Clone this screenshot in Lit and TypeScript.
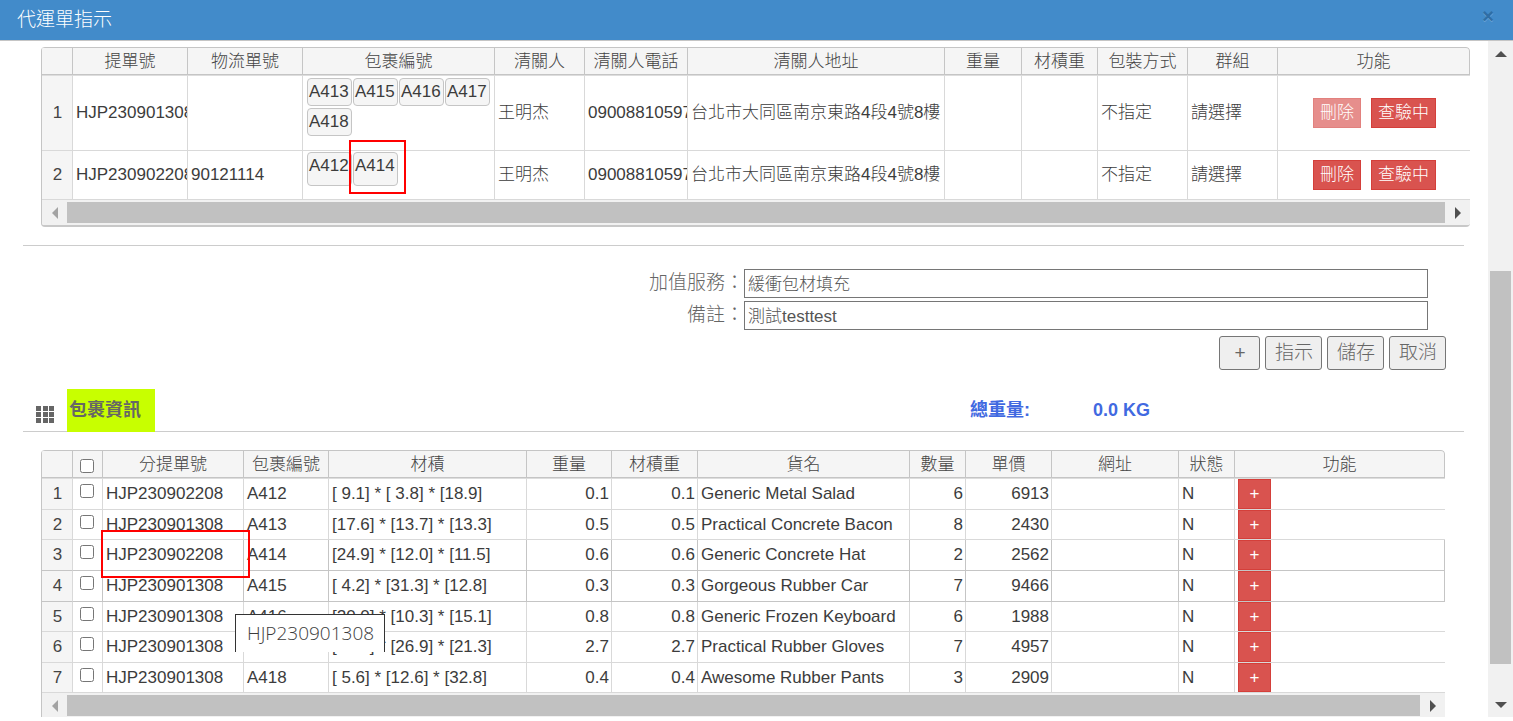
import { LitElement, html, css, svg, nothing } from "lit";
import { customElement, property } from "lit/decorators.js";

interface Shipment {
  no: string;
  logistics: string;
  parcels: string[];
  marked?: string;
  locked: boolean;
}

interface Parcel {
  bill: string;
  code: string;
  size: string;
  weight: string;
  name: string;
  qty: number;
  price: number;
}

const SHIPMENTS: Shipment[] = [
  { no: "HJP230901308", logistics: "", parcels: ["A413", "A415", "A416", "A417", "A418"], locked: true },
  { no: "HJP230902208", logistics: "90121114", parcels: ["A412", "A414"], marked: "A414", locked: false },
];

const PARCELS: Parcel[] = [
  { bill: "HJP230902208", code: "A412", size: "[ 9.1] * [ 3.8] * [18.9]", weight: "0.1", name: "Generic Metal Salad", qty: 6, price: 6913 },
  { bill: "HJP230901308", code: "A413", size: "[17.6] * [13.7] * [13.3]", weight: "0.5", name: "Practical Concrete Bacon", qty: 8, price: 2430 },
  { bill: "HJP230902208", code: "A414", size: "[24.9] * [12.0] * [11.5]", weight: "0.6", name: "Generic Concrete Hat", qty: 2, price: 2562 },
  { bill: "HJP230901308", code: "A415", size: "[ 4.2] * [31.3] * [12.8]", weight: "0.3", name: "Gorgeous Rubber Car", qty: 7, price: 9466 },
  { bill: "HJP230901308", code: "A416", size: "[20.0] * [10.3] * [15.1]", weight: "0.8", name: "Generic Frozen Keyboard", qty: 6, price: 1988 },
  { bill: "HJP230901308", code: "A417", size: "[20.7] * [26.9] * [21.3]", weight: "2.7", name: "Practical Rubber Gloves", qty: 7, price: 4957 },
  { bill: "HJP230901308", code: "A418", size: "[ 5.6] * [12.6] * [32.8]", weight: "0.4", name: "Awesome Rubber Pants", qty: 3, price: 2909 },
];

/* The last column has no width: it takes what is left. */
const SHIPMENT_COLS: [string, number | null][] = [
  ["", 31], ["提單號", 115], ["物流單號", 115], ["包裹編號", 192], ["清關人", 90], ["清關人電話", 103],
  ["清關人地址", 257], ["重量", 77], ["材積重", 76], ["包裝方式", 90], ["群組", 90], ["功能", null],
];
const PARCEL_COLS: [string, number | null][] = [
  ["", 31], ["check", 30], ["分提單號", 141], ["包裹編號", 85], ["材積", 198], ["重量", 85], ["材積重", 86],
  ["貨名", 212], ["數量", 56], ["單價", 86], ["網址", 127], ["狀態", 56], ["功能", null],
];

const ARROWS: Record<string, string> = {
  up: "M6 0L12 6H0Z",
  down: "M0 0H12L6 6Z",
  left: "M6 0V12L0 6Z",
  right: "M0 0V12L6 6Z",
};

@customElement("scroll-rail")
class ScrollRail extends LitElement {
  @property() orientation = "horizontal";

  static styles = css`
    :host { display: flex; background: #f1f1f1; box-sizing: border-box; }
    :host([orientation="horizontal"]) { height: 25px; padding: 2px 0; }
    :host([orientation="vertical"]) { width: 25px; padding: 0 2px; flex-direction: column; }
    .end { flex: 0 0 25px; display: flex; align-items: center; justify-content: center; color: #505050; }
    .idle { color: #a3a3a3; }
    .thumb { flex: 1; background: #c1c1c1; }
    .before { flex: 205; }
    .long { flex: 393; }
    .after { flex: 28; }
    svg { display: block; fill: currentColor; }
  `;

  private arrow(dir: string) {
    const flat = dir === "up" || dir === "down";
    return html`<svg width=${flat ? 12 : 6} height=${flat ? 6 : 12} aria-hidden="true">${svg`<path d=${ARROWS[dir]}></path>`}</svg>`;
  }

  render() {
    return this.orientation === "vertical"
      ? html`<div class="end">${this.arrow("up")}</div>
          <div class="before"></div><div class="long thumb"></div><div class="after"></div>
          <div class="end">${this.arrow("down")}</div>`
      : html`<div class="end idle">${this.arrow("left")}</div>
          <div class="thumb"></div>
          <div class="end">${this.arrow("right")}</div>`;
  }
}

@customElement("app-root")
class AppRoot extends LitElement {
  static styles = css`
    :host {
      display: flex;
      flex-direction: column;
      height: 100vh;
      box-sizing: border-box;
      padding-bottom: 4px;
      overflow: hidden;
      background: #fff;
      color: #3c3c3c;
      font: 300 17px/24px "Liberation Sans", "Noto Sans CJK TC", sans-serif;
    }
    * { box-sizing: border-box; }
    button, input { font: inherit; color: inherit; margin: 0; }

    .title {
      flex: none;
      display: flex;
      justify-content: space-between;
      height: 41px;
      padding: 0 19px 0 17px;
      background: #428bca;
      border-bottom: 1px solid #c5c5c5;
      color: #fff;
    }
    .title h1 { margin: 0; font-size: 19px; font-weight: 300; line-height: 40px; }
    .close {
      border: 0;
      padding: 0;
      height: 32px;
      background: none;
      color: #2f6ea5;
      font-size: 20px;
      font-weight: 700;
      text-shadow: 0 1px 0 #6ba5d8;
    }

    .body { flex: 1; min-height: 0; display: flex; }
    .content { flex: 1; min-width: 0; overflow: hidden; padding-top: 6px; }
    .rail { flex: none; }

    .grid { margin: 0 18px 0 41px; border-left: 1px solid #c5c5c5; border-radius: 4px; overflow: hidden; }
    .shipments { border-bottom: 2px solid #c8c8c8; }
    .parcels { margin-right: 43px; border-radius: 4px 4px 0 0; }
    table { width: 100%; table-layout: fixed; border-collapse: separate; border-spacing: 0; }
    thead th {
      height: 28px;
      padding: 2px 0 0;
      font-weight: 300;
      text-align: center;
      color: #444;
      background: #f5f5f5;
      border: solid #c5c5c5;
      border-width: 1px 1px 1px 0;
      line-height: 24px;
    }
    thead th:last-child { border-top-right-radius: 4px; }
    tbody tr:first-child > * { border-top: 1px solid #ddd; }
    tbody th, td {
      padding: 0 2px 0 3px;
      font-weight: 300;
      text-align: left;
      white-space: pre;
      overflow: hidden;
      border: solid #d9d9d9;
      border-width: 0 1px 1px 0;
    }
    tbody th { text-align: center; background: #f5f5f5; color: #444; }
    td:last-child { border-right: 0; }
    td.num { text-align: right; }
    td.over { position: relative; overflow: visible; }

    .shipments tbody tr { height: 49px; }
    .shipments tbody tr:first-child { height: 76px; }
    td.codes { vertical-align: top; padding: 2px 0 2px 4px; }
    tr + tr td.codes { padding-top: 1px; }
    .tags { display: flex; flex-wrap: wrap; gap: 2px 1px; }
    .tag {
      width: 45px;
      height: 28px;
      border: 1px solid #c5c5c5;
      border-radius: 4px;
      background: #f5f5f5;
      padding: 0 1px;
      line-height: 26px;
    }
    tr + tr .tag { height: 34px; }
    .holder { position: relative; }
    .mark { position: absolute; border: 2px solid #f00; pointer-events: none; z-index: 1; }
    .mark-tag { left: -5px; top: -13px; width: 57px; height: 54px; }
    .mark-bill { left: -2px; top: -10px; width: 149px; height: 48px; }

    .actions { display: flex; justify-content: center; gap: 10px; }
    .danger {
      height: 30px;
      padding: 0 6px;
      border: 1px solid #d43f3a;
      background: #d9534f;
      color: #fff;
      line-height: 26px;
    }
    .danger:disabled { opacity: 0.65; }

    .parcels tbody tr { --inner: 30px; }
    .parcels tbody tr:nth-child(3n - 1), .parcels tbody tr:last-child { --inner: 29px; }
    .parcels tbody tr > * { height: calc(var(--inner) + 1px); }
    .parcels .add { display: block; width: 33px; height: var(--inner); }
    .parcels .current > * { border-bottom-color: #c5c5c5; }
    .parcels .current td { border-right-color: #c5c5c5; }
    .parcels .current td:last-child { box-shadow: inset -1px 0 #c5c5c5; }
    .parcels .check { padding: 5px 0 0 7px; vertical-align: top; text-align: left; line-height: 14px; }
    .parcels thead .check { padding-top: 8px; }
    .check input { display: block; width: 14px; height: 14px; }
    .tip {
      position: absolute;
      left: -9px;
      top: 12px;
      z-index: 2;
      width: 150px;
      height: 38px;
      padding: 0 11px;
      border: 1px solid #333;
      border-bottom: 0;
      background: #fff;
      font: 300 19px/36px "Open Sans", "Noto Sans", sans-serif;
    }

    .form {
      margin: 18px 24px 0 23px;
      padding: 23px 36px 0 0;
      border-top: 1px solid #ccc;
      color: #555;
      display: grid;
      grid-template-columns: 721fr 684fr;
      row-gap: 3px;
    }
    .form label { text-align: right; font-size: 19px; line-height: 27px; color: #666; }
    .form input { width: 100%; height: 29px; padding: 0 3px 3px; border: 1px solid #767676; background: #fff; }
    .buttons { display: flex; justify-content: flex-end; gap: 5px; margin: 6px 42px 0 0; color: #666; }
    .buttons button {
      height: 34px;
      min-width: 41px;
      padding: 0 8px 0 9px;
      border: 1px solid #767676;
      border-radius: 3px;
      background: #efefef;
      font-size: 19px;
      line-height: 30px;
    }

    .section {
      display: grid;
      grid-template-columns: 44fr 903fr 123fr 371fr;
      margin: 19px 24px 18px 23px;
      border-bottom: 1px solid #ccc;
      height: 43px;
      font-size: 18px;
      font-weight: 700;
      line-height: 42px;
      color: #4169e1;
    }
    .section h2 {
      justify-self: start;
      width: 88px;
      height: 43px;
      margin: 0;
      padding-left: 2px;
      background: #c8ff00;
      color: #666;
      font-size: 18px;
      line-height: 42px;
    }
    .section svg { margin: 17px 0 0 13px; display: block; fill: #666; }
  `;

  private head(cols: [string, number | null][]) {
    return html`<colgroup>${cols.map(([, w]) => (w ? html`<col width=${w} />` : html`<col />`))}</colgroup>
      <thead><tr>${cols.map(([t]) =>
        t === "check"
          ? html`<th class="check"><input type="checkbox" aria-label="全選" /></th>`
          : html`<th scope="col">${t}</th>`)}</tr></thead>`;
  }

  private shipmentRow(s: Shipment, i: number) {
    return html`<tr>
      <th scope="row">${i + 1}</th>
      <td>${s.no}</td>
      <td>${s.logistics}</td>
      <td class="codes over"><div class="tags">${s.parcels.map((p) =>
        html`<div class="tag holder">${p}${p === s.marked ? html`<div class="mark mark-tag"></div>` : nothing}</div>`)}</div></td>
      <td>王明杰</td>
      <td>09008810597</td>
      <td>台北市大同區南京東路4段4號8樓</td>
      <td></td>
      <td></td>
      <td>不指定</td>
      <td>請選擇</td>
      <td><div class="actions"><button class="danger" ?disabled=${s.locked}>刪除</button><button class="danger">查驗中</button></div></td>
    </tr>`;
  }

  private parcelRow(p: Parcel, i: number) {
    return html`<tr class=${i === 2 || i === 3 ? "current" : ""}>
      <th scope="row">${i + 1}</th>
      <td class="check"><input type="checkbox" aria-label=${p.code} /></td>
      <td class="over">${p.bill}${i === 2 ? html`<div class="mark mark-bill"></div>` : nothing}</td>
      <td class="over">${p.code}${i === 4 ? html`<div class="tip" role="tooltip">HJP230901308</div>` : nothing}</td>
      <td>${p.size}</td>
      <td class="num">${p.weight}</td>
      <td class="num">${p.weight}</td>
      <td>${p.name}</td>
      <td class="num">${p.qty}</td>
      <td class="num">${p.price}</td>
      <td></td>
      <td>N</td>
      <td><button class="danger add">+</button></td>
    </tr>`;
  }

  render() {
    return html`
      <header class="title"><h1>代運單指示</h1><button class="close" aria-label="關閉">×</button></header>
      <div class="body">
        <main class="content">
          <div class="grid shipments">
            <table>${this.head(SHIPMENT_COLS)}<tbody>${SHIPMENTS.map((s, i) => this.shipmentRow(s, i))}</tbody></table>
            <scroll-rail orientation="horizontal"></scroll-rail>
          </div>

          <form class="form" @submit=${(e: Event) => e.preventDefault()}>
            <label for="service">加值服務：</label><input id="service" type="text" value="緩衝包材填充" />
            <label for="note">備註：</label><input id="note" type="text" value="測試testtest" />
          </form>
          <div class="buttons">
            <button>+</button><button>指示</button><button>儲存</button><button>取消</button>
          </div>

          <div class="section">
            <svg width="18" height="17" viewBox="0 0 18 17" aria-hidden="true">
              ${[0, 6, 12].map((y) => [0, 7, 13].map((x) => svg`<rect x=${x} y=${y} width="5" height="5"></rect>`))}
            </svg>
            <h2>包裹資訊</h2>
            <span>總重量:</span>
            <span>0.0 KG</span>
          </div>

          <div class="grid parcels">
            <table>${this.head(PARCEL_COLS)}<tbody>${PARCELS.map((p, i) => this.parcelRow(p, i))}</tbody></table>
            <scroll-rail orientation="horizontal"></scroll-rail>
          </div>
        </main>
        <scroll-rail class="rail" orientation="vertical"></scroll-rail>
      </div>
    `;
  }
}
